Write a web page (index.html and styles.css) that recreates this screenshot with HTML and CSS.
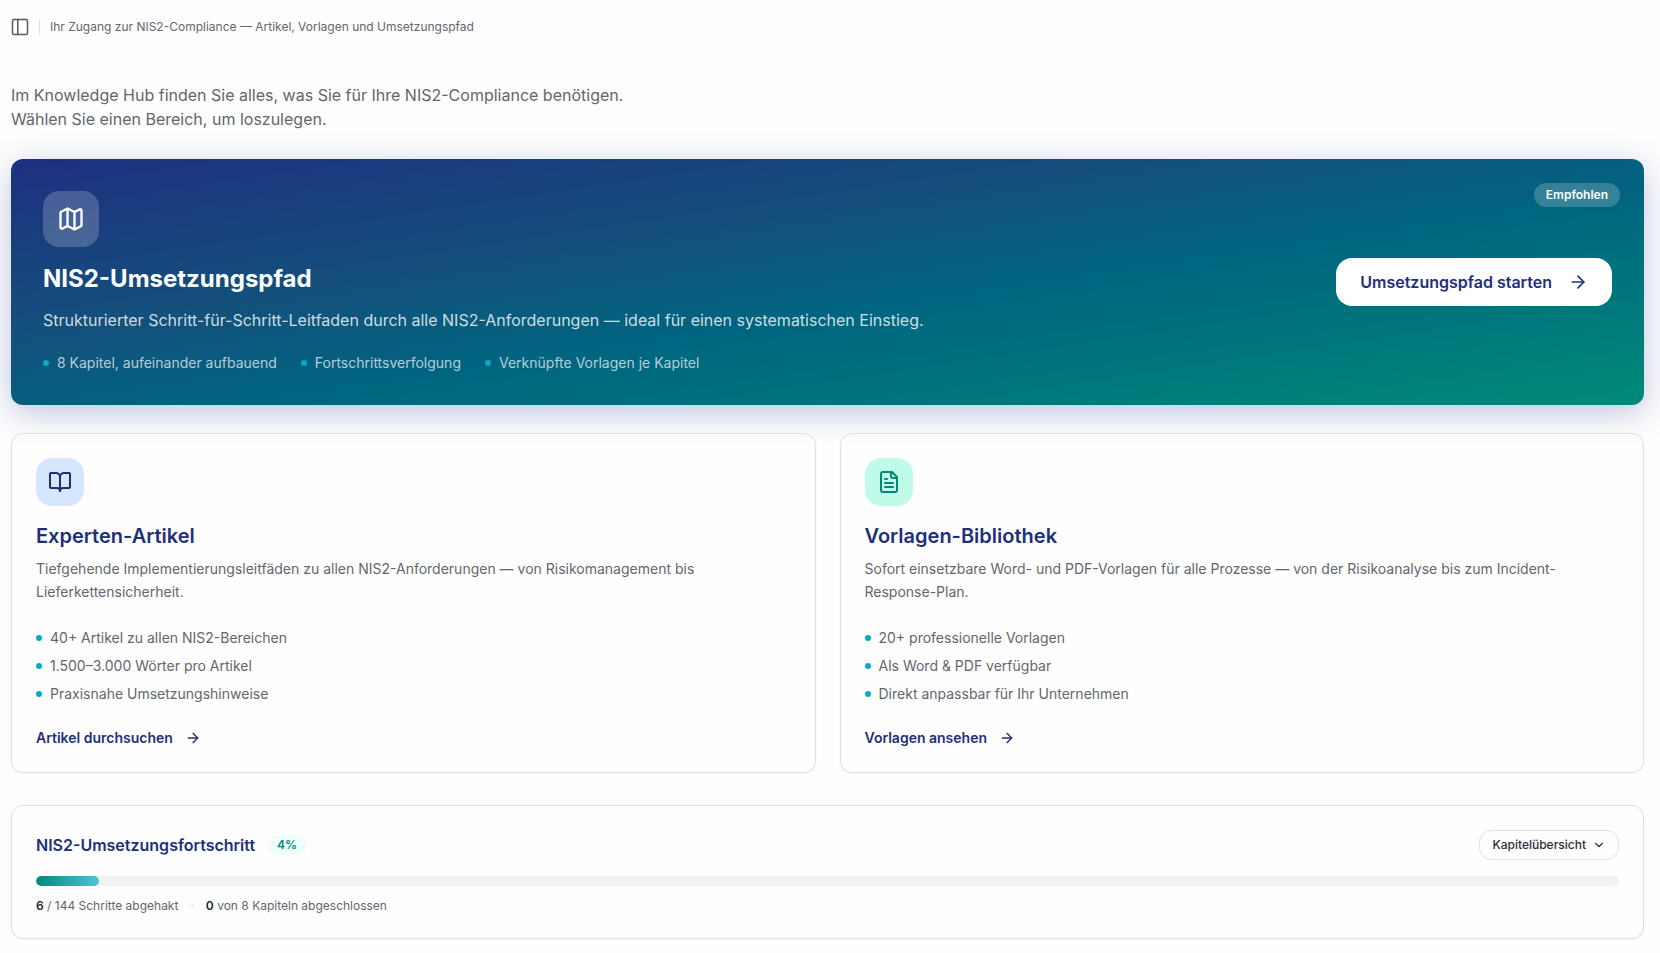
FILE: index.html
```html
<!DOCTYPE html>
<html lang="de">
<head>
<meta charset="utf-8">
<meta name="viewport" content="width=device-width, initial-scale=1">
<title>NIS2 Knowledge Hub</title>
<link rel="stylesheet" href="styles.css">
</head>
<body>
<header class="topbar">
  <button class="sidebar-toggle" type="button" aria-label="Seitenleiste umschalten">
    <svg class="icon icon-18" viewBox="0 0 24 24"><rect x="2" y="2" width="20" height="20" rx="2"/><path d="M9 2v20"/></svg>
  </button>
  <span class="divider"></span>
  <p class="tagline">Ihr Zugang zur NIS2-Compliance — Artikel, Vorlagen und Umsetzungspfad</p>
</header>
<main class="content">
  <p class="intro">Im Knowledge Hub finden Sie alles, was Sie für Ihre NIS2-Compliance benötigen. Wählen Sie einen Bereich, um loszulegen.</p>

  <section class="hero">
    <span class="hero-badge">Empfohlen</span>
    <div class="hero-body">
      <span class="tile tile-hero"><svg class="icon icon-28" viewBox="0 0 24 24"><path d="M14.106 5.553a2 2 0 0 0 1.788 0l3.659-1.83A1 1 0 0 1 21 4.619v12.764a1 1 0 0 1-.553.894l-4.553 2.277a2 2 0 0 1-1.788 0l-4.212-2.106a2 2 0 0 0-1.788 0l-3.659 1.83A1 1 0 0 1 3 19.381V6.618a1 1 0 0 1 .553-.894l4.553-2.277a2 2 0 0 1 1.788 0z"/><path d="M15 5.764v15"/><path d="M9 3.236v15"/></svg></span>
      <h1 class="hero-title">NIS2-Umsetzungspfad</h1>
      <p class="hero-text">Strukturierter Schritt-für-Schritt-Leitfaden durch alle NIS2-Anforderungen — ideal für einen systematischen Einstieg.</p>
      <ul class="points hero-points">
        <li>8 Kapitel, aufeinander aufbauend</li>
        <li>Fortschrittsverfolgung</li>
        <li>Verknüpfte Vorlagen je Kapitel</li>
      </ul>
    </div>
    <a class="hero-action" href="#umsetzungspfad">Umsetzungspfad starten
      <svg class="icon icon-20" viewBox="0 0 24 24"><path d="M5 12h14"/><path d="m12 5 7 7-7 7"/></svg>
    </a>
  </section>

  <div class="cards">
    <article class="card">
      <span class="tile tile-blue"><svg class="icon icon-24" viewBox="0 0 24 24"><path d="M12 7v14"/><path d="M3 18a1 1 0 0 1-1-1V4a1 1 0 0 1 1-1h5a4 4 0 0 1 4 4 4 4 0 0 1 4-4h5a1 1 0 0 1 1 1v13a1 1 0 0 1-1 1h-6a3 3 0 0 0-3 3 3 3 0 0 0-3-3z"/></svg></span>
      <h2 class="card-title">Experten-Artikel</h2>
      <p class="card-text">Tiefgehende Implementierungsleitfäden zu allen NIS2-Anforderungen — von Risikomanagement bis Lieferkettensicherheit.</p>
      <ul class="points card-points">
        <li>40+ Artikel zu allen NIS2-Bereichen</li>
        <li>1.500–3.000 Wörter pro Artikel</li>
        <li>Praxisnahe Umsetzungshinweise</li>
      </ul>
      <a class="card-link" href="#artikel">Artikel durchsuchen
        <svg class="icon icon-16" viewBox="0 0 24 24"><path d="M5 12h14"/><path d="m12 5 7 7-7 7"/></svg>
      </a>
    </article>
    <article class="card">
      <span class="tile tile-mint"><svg class="icon icon-24" viewBox="0 0 24 24"><path d="M15 2H6a2 2 0 0 0-2 2v16a2 2 0 0 0 2 2h12a2 2 0 0 0 2-2V7z"/><path d="M14 2v4a2 2 0 0 0 2 2h4"/><path d="M10 9H8"/><path d="M16 13H8"/><path d="M16 17H8"/></svg></span>
      <h2 class="card-title">Vorlagen-Bibliothek</h2>
      <p class="card-text">Sofort einsetzbare Word- und PDF-Vorlagen für alle Prozesse — von der Risikoanalyse bis zum Incident-Response-Plan.</p>
      <ul class="points card-points">
        <li>20+ professionelle Vorlagen</li>
        <li>Als Word &amp; PDF verfügbar</li>
        <li>Direkt anpassbar für Ihr Unternehmen</li>
      </ul>
      <a class="card-link" href="#vorlagen">Vorlagen ansehen
        <svg class="icon icon-16" viewBox="0 0 24 24"><path d="M5 12h14"/><path d="m12 5 7 7-7 7"/></svg>
      </a>
    </article>
  </div>

  <section class="card progress">
    <div class="progress-head">
      <h2 class="progress-title" id="progress-title">NIS2-Umsetzungsfortschritt</h2>
      <span class="percent">4%</span>
      <button class="overview" type="button" aria-expanded="false">Kapitelübersicht
        <svg class="icon icon-14" viewBox="0 0 24 24"><path d="m6 9 6 6 6-6"/></svg>
      </button>
    </div>
    <div class="track" role="progressbar" aria-labelledby="progress-title" aria-valuenow="4" aria-valuemin="0" aria-valuemax="100">
      <div class="fill" style="width: 4%"></div>
    </div>
    <p class="stats"><span><strong>6</strong> / 144 Schritte abgehakt</span><span class="dot">·</span><span><strong>0</strong> von 8 Kapiteln abgeschlossen</span></p>
  </section>
</main>
</body>
</html>
```

FILE: styles.css
```css
:root {
  --navy: #1e2f7a;
  --teal: #00897b;
  --cyan: #00acc8;
  --grey: #63666d;
  --line: #dfe1e5;
}

* {
  box-sizing: border-box;
}

body {
  margin: 0;
  background: #fefefe;
  color: var(--grey);
  font-family: Inter, "Liberation Sans", sans-serif;
  font-size: 14px;
  line-height: 20px;
}

h1, h2, p, ul {
  margin: 0;
  padding: 0;
}

ul {
  list-style: none;
}

a {
  text-decoration: none;
}

button {
  font: inherit;
  cursor: pointer;
}

.icon {
  flex: none;
  fill: none;
  stroke: currentColor;
  stroke-width: 2;
  stroke-linecap: round;
  stroke-linejoin: round;
}

.icon-14 { width: 14px; height: 14px; }
.icon-16 { width: 16px; height: 16px; }
.icon-18 { width: 18px; height: 18px; }
.icon-20 { width: 20px; height: 20px; }
.icon-24 { width: 24px; height: 24px; }
.icon-28 { width: 28px; height: 28px; }

.topbar {
  display: flex;
  align-items: center;
  height: 54px;
  padding: 0 16px 0 11px;
}

.sidebar-toggle {
  display: flex;
  padding: 0;
  border: 0;
  background: none;
  color: #55585f;
}

.divider {
  width: 1px;
  height: 16px;
  margin: 0 10px;
  background: var(--line);
}

.tagline {
  font-size: 12px;
  line-height: 16px;
}

.content {
  padding: 29px 16px 14px 11px;
}

.intro {
  max-width: 672px;
  margin-bottom: 28px;
  font-size: 16px;
  line-height: 24px;
}

.hero {
  position: relative;
  display: flex;
  align-items: center;
  justify-content: space-between;
  gap: 32px;
  margin-bottom: 28px;
  padding: 32px;
  border-radius: 12px;
  background: linear-gradient(to bottom right, #1e2f80, #14507c 36%, #006480 56%, #008a78);
  box-shadow: 0 8px 32px rgba(30, 47, 140, 0.28);
  color: #fff;
}

.hero-badge {
  position: absolute;
  top: 24px;
  right: 24px;
  padding: 4px 12px;
  border-radius: 12px;
  background: rgba(255, 255, 255, 0.2);
  font-size: 12px;
  font-weight: 600;
  line-height: 16px;
}

.tile {
  display: flex;
  align-items: center;
  justify-content: center;
  width: 48px;
  height: 48px;
  margin-bottom: 16px;
  border-radius: 16px;
}

.tile-hero {
  width: 56px;
  height: 56px;
  background: rgba(255, 255, 255, 0.2);
}

.tile-blue {
  background: #d6e6fe;
  color: var(--navy);
}

.tile-mint {
  background: #c0fbea;
  color: var(--teal);
}

.hero-title {
  margin-bottom: 12px;
  font-size: 24px;
  font-weight: 700;
  line-height: 32px;
}

.hero-text {
  margin-bottom: 20px;
  color: rgba(255, 255, 255, 0.8);
  font-size: 16px;
  line-height: 26px;
}

.points {
  display: flex;
}

.points li {
  display: flex;
  align-items: center;
  gap: 8px;
}

.points li::before {
  content: "";
  flex: none;
  width: 6px;
  height: 6px;
  border-radius: 50%;
  background: var(--cyan);
}

.hero-points {
  flex-wrap: wrap;
  gap: 8px 24px;
  color: rgba(255, 255, 255, 0.7);
}

.hero-action {
  display: flex;
  flex: none;
  align-items: center;
  gap: 16px;
  padding: 12px 24px;
  border-radius: 16px;
  background: #fff;
  color: var(--navy);
  font-size: 16px;
  font-weight: 600;
  line-height: 24px;
}

.cards {
  display: grid;
  grid-template-columns: 1fr 1fr;
  gap: 24px;
  margin-bottom: 32px;
}

.card {
  padding: 24px;
  border: 1px solid var(--line);
  border-radius: 12px;
  background: #fefefe;
  box-shadow: 0 1px 2px rgba(0, 0, 0, 0.05);
}

.card-title {
  margin-bottom: 7px;
  color: var(--navy);
  font-size: 20px;
  font-weight: 600;
  line-height: 28px;
}

.card-text {
  margin-bottom: 25px;
  line-height: 23px;
}

.card-points {
  flex-direction: column;
  gap: 8px;
  margin-bottom: 24px;
}

.card-link {
  display: inline-flex;
  align-items: center;
  gap: 12px;
  color: var(--navy);
  font-weight: 600;
  vertical-align: top;
}

.progress-head {
  display: flex;
  align-items: center;
  gap: 12px;
  margin-bottom: 16px;
}

.progress-title {
  color: var(--navy);
  font-size: 16px;
  font-weight: 600;
  line-height: 24px;
}

.percent {
  padding: 2px 10px;
  border-radius: 10px;
  background: #effefa;
  color: var(--teal);
  font-size: 12px;
  font-weight: 600;
  line-height: 16px;
}

.overview {
  display: flex;
  align-items: center;
  gap: 6px;
  margin-left: auto;
  padding: 6px 12px;
  border: 1px solid var(--line);
  border-radius: 12px;
  background: #fefefe;
  color: #2b2e38;
  font-size: 12px;
  font-weight: 500;
  line-height: 16px;
}

.track {
  height: 10px;
  margin-bottom: 12px;
  overflow: hidden;
  border-radius: 5px;
  background: #f1f2f3;
}

.fill {
  height: 100%;
  border-radius: 5px;
  background: linear-gradient(90deg, #00897b, #4dc4d9);
}

.stats {
  display: flex;
  gap: 12px;
  font-size: 12px;
  line-height: 16px;
}

.stats strong {
  color: #23262e;
  font-weight: 600;
}

.dot {
  color: #c4c7cc;
}
```
